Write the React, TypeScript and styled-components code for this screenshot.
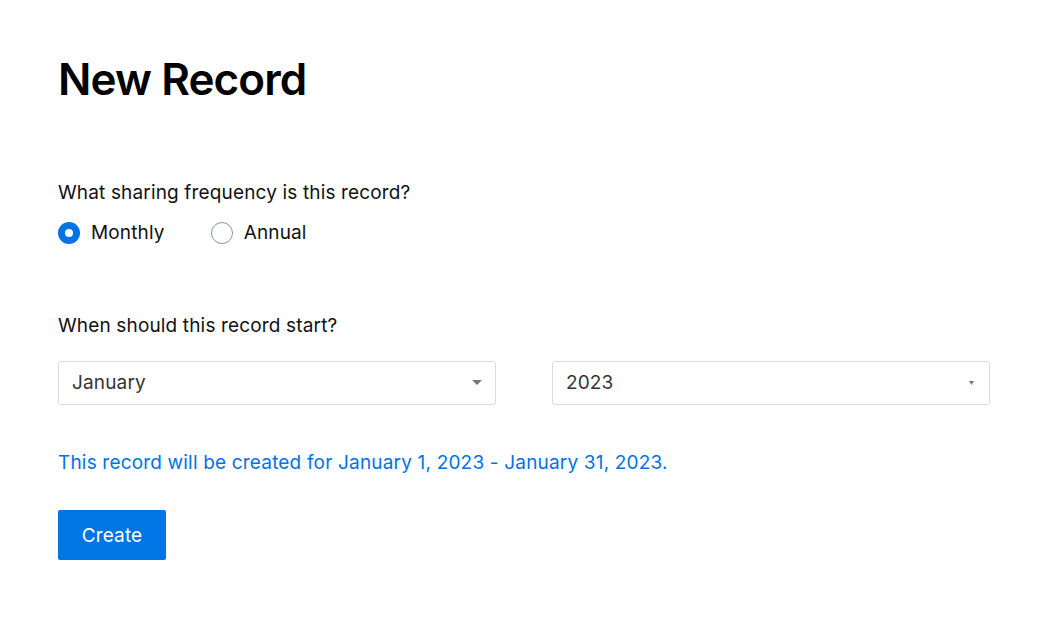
import React, { useState } from "react";
import styled, { createGlobalStyle } from "styled-components";

const GlobalStyle = createGlobalStyle`
  html, body { margin: 0; padding: 0; background: #ffffff; }
  body { font-family: Inter, "Noto Sans", sans-serif; color: #111; }
  * { box-sizing: border-box; }
`;

const Page = styled.main`
  width: 1048px;
  padding: 52px 58px 0 58px;
  display: flex;
  flex-direction: column;
`;

const Title = styled.h1`
  margin: 0;
  font-size: 44px;
  line-height: 54px;
  font-weight: 600;
  letter-spacing: -0.9px;
  color: #000;
`;

const Section = styled.section<{ $top: number }>`
  margin-top: ${(p) => p.$top}px;
  display: flex;
  flex-direction: column;
`;

const Question = styled.p`
  margin: 0;
  font-size: 19px;
  line-height: 22px;
  letter-spacing: 0.15px;
  color: #111;
`;

const RadioRow = styled.div`
  margin-top: 18px;
  display: flex;
  gap: 46px;
`;

const RadioLabel = styled.label`
  display: flex;
  align-items: center;
  gap: 11px;
  font-size: 19px;
  line-height: 22px;
  letter-spacing: 0.15px;
  color: #111;
  cursor: pointer;
`;

const RadioDot = styled.span<{ $checked: boolean }>`
  width: 22px;
  height: 22px;
  border-radius: 50%;
  display: inline-flex;
  align-items: center;
  justify-content: center;
  background: ${(p) => (p.$checked ? "#0074e4" : "#fff")};
  border: ${(p) => (p.$checked ? "none" : "1.5px solid #8b8fa3")};
  &::after {
    content: "";
    width: 8px;
    height: 8px;
    border-radius: 50%;
    background: #fff;
    display: ${(p) => (p.$checked ? "block" : "none")};
  }
`;

const SelectRow = styled.div`
  margin-top: 24px;
  display: grid;
  grid-template-columns: 438px 438px;
  gap: 56px;
`;

const SelectBox = styled.div`
  height: 44px;
  border: 1px solid #dcdcdc;
  border-radius: 3px;
  display: flex;
  align-items: center;
  justify-content: space-between;
  padding: 0 13px 1px 13px;
  font-size: 19px;
  letter-spacing: 0.15px;
  color: #333;
  background: #fff;
`;

const CaretIcon = styled.svg`
  display: block;
  flex: none;
`;

const Info = styled.p`
  margin: 47px 0 0 0;
  font-size: 19px;
  line-height: 22px;
  letter-spacing: 0.18px;
  color: #0073e6;
`;

const Button = styled.button`
  margin-top: 36px;
  width: 108px;
  height: 50px;
  border: none;
  border-radius: 2px;
  background: #0075e6;
  color: #fff;
  font-family: inherit;
  font-size: 19px;
  letter-spacing: 0.15px;
  cursor: pointer;
`;

function Caret({ w, h, mr }: { w: number; h: number; mr: number }) {
  return (
    <CaretIcon width={w} height={h} viewBox={`0 0 ${w} ${h}`} style={{ marginRight: mr }}>
      <polygon points={`0,0 ${w},0 ${w / 2},${h}`} fill="#777" />
    </CaretIcon>
  );
}

export default function App() {
  const [freq, setFreq] = useState("monthly");
  return (
    <>
      <GlobalStyle />
      <Page>
        <Title>New Record</Title>
        <Section $top={76}>
          <Question>What sharing frequency is this record?</Question>
          <RadioRow>
            <RadioLabel onClick={() => setFreq("monthly")}>
              <RadioDot $checked={freq === "monthly"} />
              Monthly
            </RadioLabel>
            <RadioLabel onClick={() => setFreq("annual")}>
              <RadioDot $checked={freq === "annual"} />
              Annual
            </RadioLabel>
          </RadioRow>
        </Section>
        <Section $top={71}>
          <Question>When should this record start?</Question>
          <SelectRow>
            <SelectBox>
              <span>January</span>
              <Caret w={10} h={5} mr={0} />
            </SelectBox>
            <SelectBox>
              <span>2023</span>
              <Caret w={5} h={4} mr={2} />
            </SelectBox>
          </SelectRow>
        </Section>
        <Info>This record will be created for January 1, 2023 - January 31, 2023.</Info>
        <Button>Create</Button>
      </Page>
    </>
  );
}
